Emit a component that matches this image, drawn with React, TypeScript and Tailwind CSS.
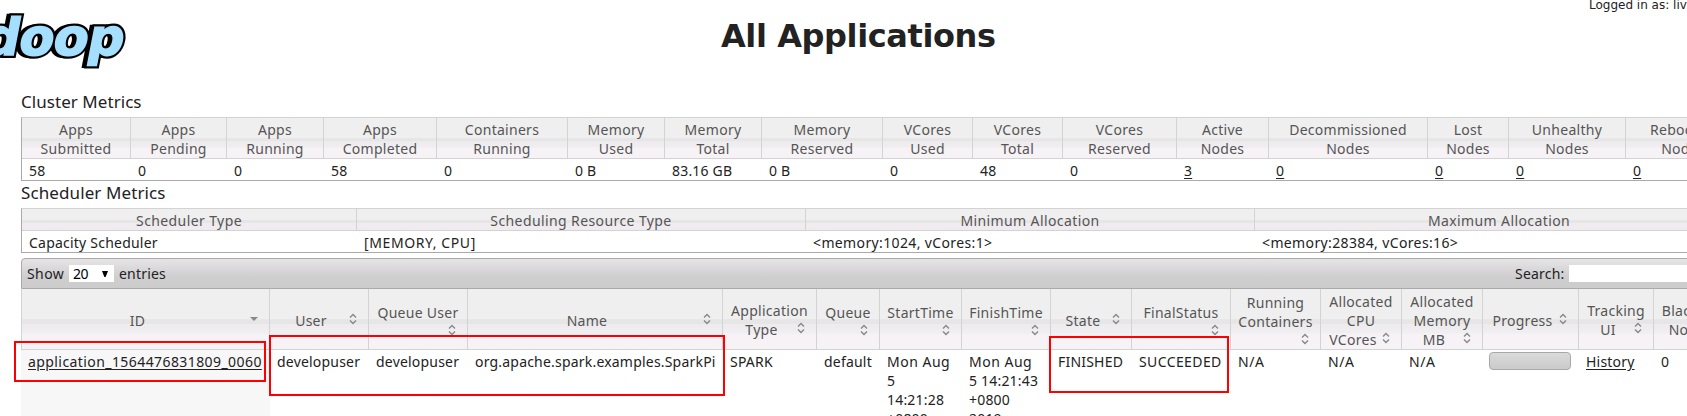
import type { ReactNode } from "react";

const band =
  "bg-[linear-gradient(to_bottom,#efefef_0%,#efefef_50%,#e6e6e6_51%,#e6e6e6_58%,#efebef_59%,#efeef0_72%,#f6f2f6_76%,#f6f2f6_100%)]";

type Metric = { w: string; head: [string, string]; value: string; link?: boolean };

const metrics: Metric[] = [
  { w: "w-[109px]", head: ["Apps", "Submitted"], value: "58" },
  { w: "w-[96px]", head: ["Apps", "Pending"], value: "0" },
  { w: "w-[97px]", head: ["Apps", "Running"], value: "0" },
  { w: "w-[113px]", head: ["Apps", "Completed"], value: "58" },
  { w: "w-[131px]", head: ["Containers", "Running"], value: "0" },
  { w: "w-[97px]", head: ["Memory", "Used"], value: "0 B" },
  { w: "w-[97px]", head: ["Memory", "Total"], value: "83.16 GB" },
  { w: "w-[121px]", head: ["Memory", "Reserved"], value: "0 B" },
  { w: "w-[90px]", head: ["VCores", "Used"], value: "0" },
  { w: "w-[90px]", head: ["VCores", "Total"], value: "48" },
  { w: "w-[114px]", head: ["VCores", "Reserved"], value: "0" },
  { w: "w-[92px]", head: ["Active", "Nodes"], value: "3", link: true },
  { w: "w-[159px]", head: ["Decommissioned", "Nodes"], value: "0", link: true },
  { w: "w-[81px]", head: ["Lost", "Nodes"], value: "0", link: true },
  { w: "w-[117px]", head: ["Unhealthy", "Nodes"], value: "0", link: true },
  { w: "w-[115px]", head: ["Rebooted", "Nodes"], value: "0", link: true },
];

const scheduler = [
  { w: "w-[335px]", head: "Scheduler Type", value: "Capacity Scheduler", track: "tracking-[0.22px]" },
  { w: "w-[449px]", head: "Scheduling Resource Type", value: "[MEMORY, CPU]", track: "tracking-[0.6px]" },
  { w: "w-[449px]", head: "Minimum Allocation", value: "<memory:1024, vCores:1>", track: "tracking-[0.37px]" },
  { w: "w-[489px]", head: "Maximum Allocation", value: "<memory:28384, vCores:16>", track: "tracking-[0.37px]" },
];

type Column = {
  w: string;
  lines: string[];
  top: string;
  icon: string;
  wrapped?: boolean;
  sorted?: boolean;
  cell: ReactNode;
};

const columns: Column[] = [
  {
    w: "w-[248px]", lines: ["ID"], top: "pt-[22px]", icon: "mt-[24px]", sorted: true,
    cell: <a className="underline underline-offset-2 tracking-[0.42px]">application_1564476831809_0060</a>,
  },
  { w: "w-[99px]", lines: ["User"], top: "pt-[22px]", icon: "mt-[24px]", cell: "developuser" },
  { w: "w-[99px]", lines: ["Queue User"], top: "pt-[14px]", icon: "mt-[35px]", wrapped: true, cell: "developuser" },
  { w: "w-[255px]", lines: ["Name"], top: "pt-[22px]", icon: "mt-[24px]", cell: "org.apache.spark.examples.SparkPi" },
  { w: "w-[94px]", lines: ["Application", "Type"], top: "pt-[12px]", icon: "mt-[33px]", cell: "SPARK" },
  { w: "w-[63px]", lines: ["Queue"], top: "pt-[14px]", icon: "mt-[35px]", wrapped: true, cell: "default" },
  {
    w: "w-[82px]", lines: ["StartTime"], top: "pt-[14px]", icon: "mt-[35px]", wrapped: true,
    cell: <><span className="tracking-[0.5px]">Mon Aug</span><br />5<br />14:21:28<br />+0800<br />2019</>,
  },
  {
    w: "w-[89px]", lines: ["FinishTime"], top: "pt-[14px]", icon: "mt-[35px]", wrapped: true,
    cell: <><span className="tracking-[0.5px]">Mon Aug</span><br />5 14:21:43<br />+0800<br />2019</>,
  },
  { w: "w-[81px]", lines: ["State"], top: "pt-[22px]", icon: "mt-[24px]", cell: "FINISHED" },
  {
    w: "w-[99px]", lines: ["FinalStatus"], top: "pt-[14px]", icon: "mt-[35px]", wrapped: true,
    cell: <span className="tracking-[0.4px]">SUCCEEDED</span>,
  },
  { w: "w-[90px]", lines: ["Running", "Containers"], top: "pt-[4px]", icon: "mt-[44px]", wrapped: true, cell: <span className="tracking-[0.6px]">N/A</span> },
  { w: "w-[81px]", lines: ["Allocated", "CPU", "VCores"], top: "pt-[3px]", icon: "mt-[43px]", cell: <span className="tracking-[0.6px]">N/A</span> },
  { w: "w-[81px]", lines: ["Allocated", "Memory", "MB"], top: "pt-[3px]", icon: "mt-[43px]", cell: <span className="tracking-[0.6px]">N/A</span> },
  {
    w: "w-[96px]", lines: ["Progress"], top: "pt-[22px]", icon: "mt-[24px]",
    cell: <div className="-ml-px h-[18px] w-[82px] rounded-[4px] border border-[#a8a8a8] bg-linear-to-b from-[#dbd9db] to-[#cbcbcb]" />,
  },
  {
    w: "w-[75px]", lines: ["Tracking", "UI"], top: "pt-[12px]", icon: "mt-[33px]",
    cell: <a className="underline underline-offset-2">History</a>,
  },
  { w: "w-[90px]", lines: ["Blacklisted", "Nodes"], top: "pt-[12px]", icon: "mt-[33px]", cell: "0" },
];

function SortIcon({ sorted }: { sorted?: boolean }) {
  return (
    <svg width="8" height="12" viewBox="0 0 8 12" fill="none" stroke="#888" strokeWidth="1.4">
      {sorted ? <path d="M0 4h8L4 8z" fill="#888" stroke="none" /> : <path d="M1 4.5 4 1.5l3 3M1 7.5l3 3 3-3" />}
    </svg>
  );
}

function Logo() {
  return (
    <svg width="140" height="80" viewBox="0 0 140 80" className="shrink-0">
      <g
        transform="translate(10 54.5) skewX(-11)"
        fontFamily="DejaVu Sans, sans-serif"
        fontWeight="700"
        fontSize="51"
        strokeLinejoin="miter"
      >
        <text x="-32" y="0" textLength="141" fill="#000" stroke="#000" strokeWidth="5">doop</text>
        <text x="-29" y="0" textLength="141" fill="#000" stroke="#000" strokeWidth="6">doop</text>
        <text x="-29" y="0" textLength="141" fill="#a5dfff" stroke="#a5dfff" strokeWidth="1.5">doop</text>
      </g>
    </svg>
  );
}

export default function App() {
  return (
    <div className="relative h-[416px] w-full overflow-hidden bg-white font-['Noto_Sans',sans-serif] text-[14px] leading-[19px] tracking-[0.2px] text-[#222] whitespace-nowrap">
      <header className="flex h-[90px] items-start">
        <Logo />
        <h1 className="ml-[581px] mt-[14px] font-['DejaVu_Sans',sans-serif] text-[32px] leading-[44px] font-bold tracking-[-0.4px]">
          All Applications
        </h1>
        <p className="ml-auto -mt-[3px] w-[98px] shrink-0 font-['DejaVu_Sans',sans-serif] text-[12px] leading-[16px] tracking-normal">
          Logged in as: livy
        </p>
      </header>

      <main className="ml-[21px] w-[1722px]">
        <h2 className="h-[27px] text-[17px] leading-[24px] tracking-[0.05px]">Cluster Metrics</h2>
        <section className="border-y border-l border-t-[#d3d3d3] border-b-[#aaa] border-l-[#aaa]">
          <div className={`flex h-[41px] border-b border-[#d3d3d3] tracking-[0.28px] text-[#555] ${band}`}>
            {metrics.map((m, i) => (
              <div key={i} className={`${m.w} shrink-0 border-r border-[#d3d3d3] pt-[2px] text-center`}>
                {m.head[0]}<br />{m.head[1]}
              </div>
            ))}
          </div>
          <div className="flex h-[21px]">
            {metrics.map((m, i) => (
              <div key={i} className={`${m.w} shrink-0 pl-[7px] pt-[2px]`}>
                <span className={m.link ? "underline underline-offset-2" : ""}>{m.value}</span>
              </div>
            ))}
          </div>
        </section>

        <h2 className="h-[27px] text-[17px] leading-[24px] tracking-[0.1px]">Scheduler Metrics</h2>
        <section className="border-y border-l border-t-[#d3d3d3] border-b-[#aaa] border-l-[#aaa]">
          <div className="flex h-[22px] border-b border-[#d3d3d3] bg-[linear-gradient(to_bottom,#efefef_0%,#efefef_50%,#e6e6e6_51%,#e6e6e6_68%,#efebef_69%,#efebef_100%)] tracking-[0.4px] text-[#555]">
            {scheduler.map((s) => (
              <div key={s.head} className={`${s.w} shrink-0 border-r border-[#d3d3d3] pt-[2px] text-center`}>{s.head}</div>
            ))}
          </div>
          <div className="flex h-[21px]">
            {scheduler.map((s) => (
              <div key={s.head} className={`${s.w} ${s.track} shrink-0 pl-[7px] pt-[2px]`}>{s.value}</div>
            ))}
          </div>
        </section>

        <section className="mt-[5px]">
          <div className="flex h-[31px] items-center rounded-tl-[4px] border border-[#aaa] bg-[linear-gradient(to_bottom,#e7e3e7_0%,#dedede_20%,#d6d3d6_45%,#cecece_65%,#cccccc_100%)] pl-[5px]">
            <span className="w-[42px] tracking-[0.4px]">Show</span>
            <div className="flex h-[17px] w-[45px] items-center justify-between bg-white pr-[6px] pl-[4px] tracking-[-0.5px] text-black">
              20
              <svg width="6" height="6" viewBox="0 0 6 6"><path d="M0 0h6L3.6 6H2.4z" fill="#000" /></svg>
            </div>
            <span className="ml-[5px] w-[1396px] shrink-0">entries</span>
            <span className="w-[54px] shrink-0">Search:</span>
            <div className="h-[17px] w-[160px] bg-white" />
          </div>
          <div className={`flex h-[61px] border-b border-l border-[#d3d3d3] tracking-[0.28px] text-[#555] ${band}`}>
            {columns.map((c, i) => (
              <div key={i} className={`${c.w} grid shrink-0 border-r border-[#d3d3d3] *:[grid-area:1/1]`}>
                <div className={`${c.top} text-center`}>
                  {c.lines.map((l, j) => (
                    <div key={l} className={j === c.lines.length - 1 && !c.wrapped ? "pr-[16px]" : ""}>{l}</div>
                  ))}
                </div>
                <div className={`${c.icon} mr-[11px] justify-self-end`}><SortIcon sorted={c.sorted} /></div>
              </div>
            ))}
          </div>
          <div className="flex h-[100px]">
            {columns.map((c, i) => (
              <div key={i} className={`${c.sorted ? "w-[249px] bg-[#f7f7f7]" : c.w} shrink-0 pl-[7px] pt-[2px]`}>
                {c.cell}
              </div>
            ))}
          </div>
        </section>
      </main>

      <div className="absolute left-[14px] top-[341px] h-[41px] w-[252px] border-2 border-[#ff0000]" />
      <div className="absolute left-[269px] top-[335px] h-[61px] w-[456px] border-2 border-[#ff0000]" />
      <div className="absolute left-[1049px] top-[336px] h-[57px] w-[180px] border-2 border-[#ff0000]" />
    </div>
  );
}
